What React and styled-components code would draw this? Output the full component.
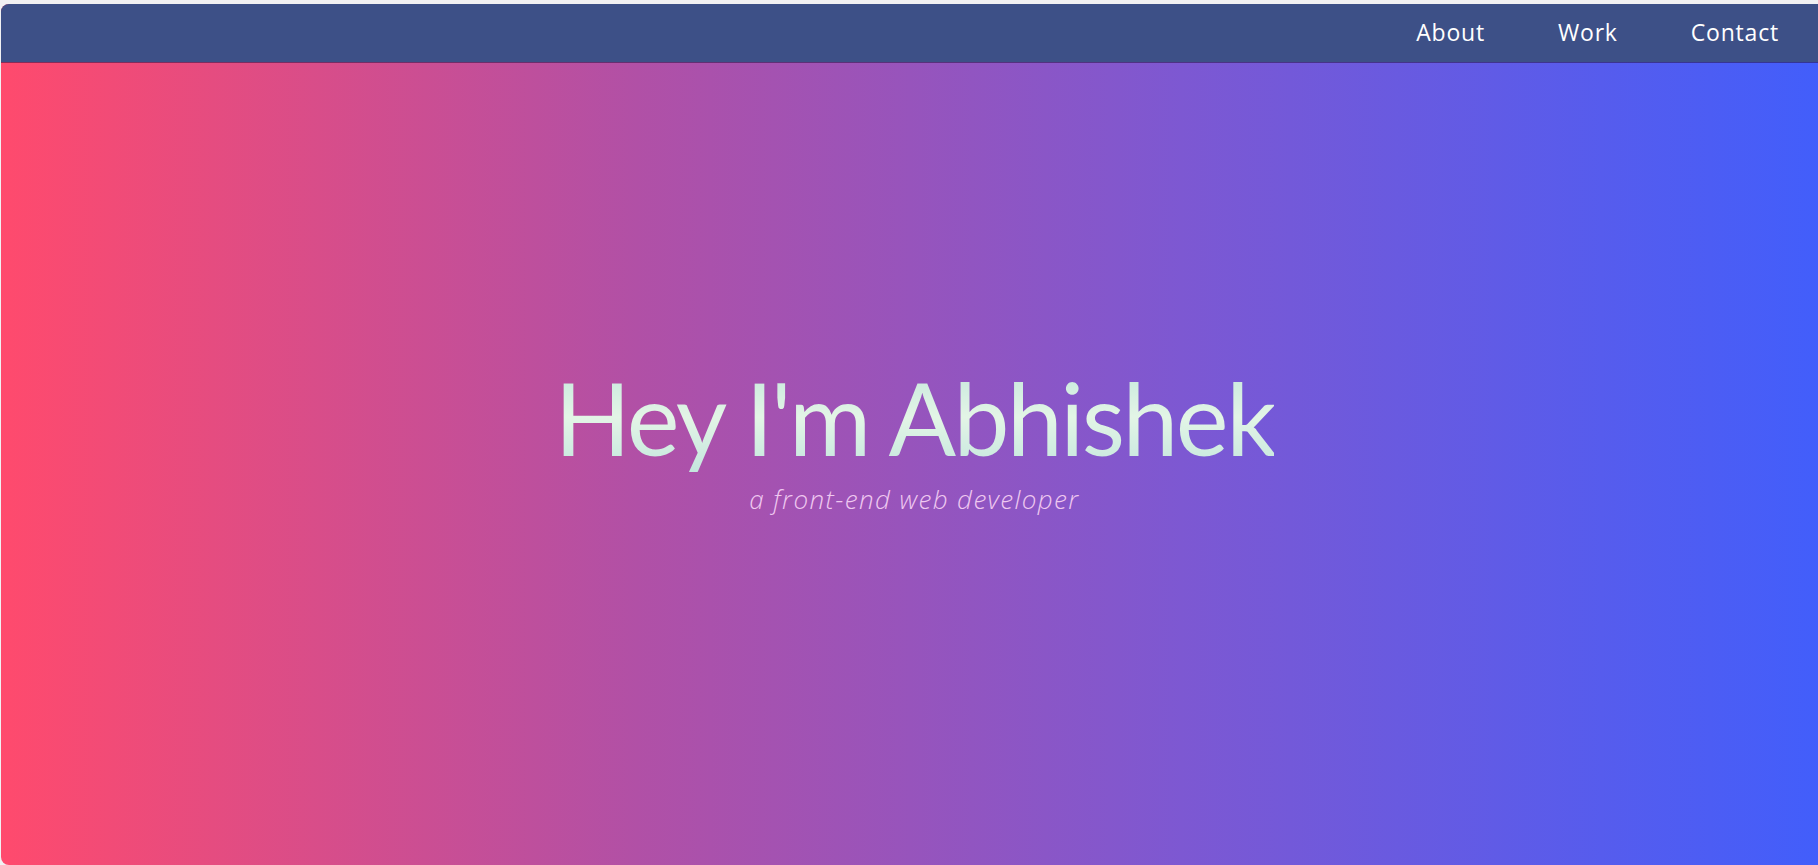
import React from "react";
import styled, { createGlobalStyle } from "styled-components";

const GlobalStyle = createGlobalStyle`
  *, *::before, *::after {
    box-sizing: border-box;
  }

  html, body {
    margin: 0;
    padding: 0;
    background: #f1f1f3;
    font-family: "Lato", "Open Sans", sans-serif;
  }
`;

const Frame = styled.div`
  margin: 4px 0 0 1px;
  height: 861px;
  border-radius: 8px 0 0 8px;
  overflow: hidden;
  display: flex;
  flex-direction: column;
  background: linear-gradient(to right, #ff4a6d 0%, #b150a6 35%, #7d58d2 65%, #425efb 100%);
`;

const NavBar = styled.nav`
  height: 58px;
  flex: none;
  background: #3d5087;
  box-shadow: 0 1px 0 rgba(40, 20, 70, 0.55);
  display: flex;
  justify-content: flex-end;
  align-items: center;
  padding: 0 39px 2px 0;
  gap: 73px;
`;

const NavLink = styled.a`
  color: #ffffff;
  font-family: "Open Sans", "Lato", sans-serif;
  font-size: 23px;
  text-decoration: none;
  letter-spacing: 0.8px;
`;

const Hero = styled.section`
  flex: 1;
  display: flex;
  flex-direction: column;
  align-items: center;
  justify-content: center;
  padding-bottom: 48px;
  padding-left: 10px;
`;

const Title = styled.h1`
  margin: 0;
  font-family: "Lato", sans-serif;
  font-weight: 400;
  font-size: 100px;
  line-height: 1.1;
  letter-spacing: -2.5px;
  background: linear-gradient(to bottom, #c3e6dc, #e3f5e6 50%, #c4e6de);
  -webkit-background-clip: text;
  background-clip: text;
  color: transparent;
`;

const Subtitle = styled.p`
  margin: 9px 0 0;
  font-family: "Open Sans", sans-serif;
  font-style: italic;
  font-weight: 300;
  font-size: 26px;
  letter-spacing: 1.4px;
  color: #efc8f0;
`;

export default function App() {
  return (
    <>
      <GlobalStyle />
      <Frame>
        <NavBar>
          <NavLink href="#about">About</NavLink>
          <NavLink href="#work">Work</NavLink>
          <NavLink href="#contact">Contact</NavLink>
        </NavBar>
        <Hero>
          <Title>Hey I'm Abhishek</Title>
          <Subtitle>a front-end web developer</Subtitle>
        </Hero>
      </Frame>
    </>
  );
}
